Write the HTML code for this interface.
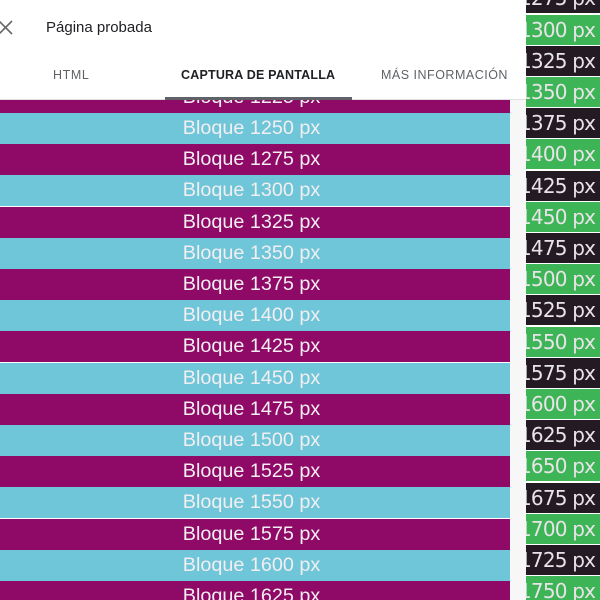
<!DOCTYPE html>
<html style="overflow:hidden"><head><style>
html,body{margin:0;width:600px;height:600px;overflow:hidden}
body{background:#fff;position:relative;font-family:"Liberation Sans",sans-serif}
.l{position:absolute;left:0;width:510px;height:31px;text-align:center;color:#f2eef2;font-size:19.8px;line-height:31px;text-indent:-7px}
.p{background:#8e0a66}.c{background:#6fc6d8}
.r{position:absolute;left:526px;width:74px;height:30px;overflow:hidden;font-size:20px;line-height:30px;color:#e8e4e8;font-family:"DejaVu Sans","Liberation Sans",sans-serif}
.r span{position:absolute;left:-7px;letter-spacing:-0.8px}
.g{background:#3db556}.d{background:#231a24}
</style></head><body>
<div style="position:absolute;left:510px;top:100px;width:16px;height:500px;background:#f7f7f7"></div>
<div id="L"></div><div id="R"></div>
<script>
var L='',R='';
for(var k=-1;k<16;k++){var y=113+31.2*k;var n=1250+25*k;
L+='<div class="l '+(k%2==0?'c':'p')+'" style="top:'+y.toFixed(1)+'px">Bloque '+n+' px</div>';}
for(var k=-1;k<19;k++){var y=14.5+31.2*k;var n=1300+25*k;
R+='<div class="r '+(Math.abs(k)%2==0?'g':'d')+'" style="top:'+y.toFixed(1)+'px"><span>'+n+' px</span></div>';}
document.getElementById('L').innerHTML=L;document.getElementById('R').innerHTML=R;
</script>
<div style="position:absolute;left:0;top:0;width:526px;height:100px;background:#fff"></div>
<div style="position:absolute;left:0;top:99px;width:526px;height:1px;background:#e0e0e0"></div>
<svg style="position:absolute;left:0;top:20px" width="14" height="16"><path d="M-1 1L12 14M12 1L-1 14" stroke="#666" stroke-width="1.6"/></svg>
<div style="position:absolute;left:46px;top:19px;font-size:15px;color:#202124">Página probada</div>
<div style="position:absolute;left:53px;top:68px;font-size:12.5px;letter-spacing:.6px;color:#5f6368">HTML</div>
<div style="position:absolute;left:181px;top:68px;font-size:12.5px;letter-spacing:.2px;color:#202124;font-weight:bold">CAPTURA DE PANTALLA</div>
<div style="position:absolute;left:381px;top:68px;font-size:12.5px;letter-spacing:.5px;color:#5f6368">MÁS INFORMACIÓN</div>
<div style="position:absolute;left:165px;top:97px;width:187px;height:3px;background:#5f6368"></div>
</body></html>
